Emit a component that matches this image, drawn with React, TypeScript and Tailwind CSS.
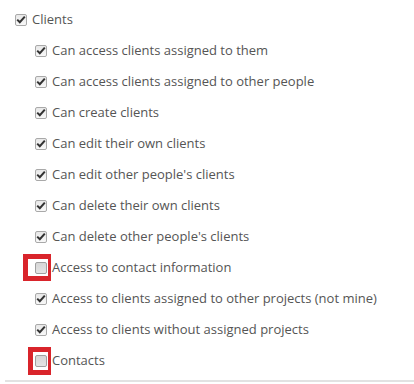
import React from 'react'

type Item = { label: string; checked: boolean; marked?: 'a' | 'b' }

const items: Item[] = [
  { label: 'Can access clients assigned to them', checked: true },
  { label: 'Can access clients assigned to other people', checked: true },
  { label: 'Can create clients', checked: true },
  { label: 'Can edit their own clients', checked: true },
  { label: "Can edit other people's clients", checked: true },
  { label: 'Can delete their own clients', checked: true },
  { label: "Can delete other people's clients", checked: true },
  { label: 'Access to contact information', checked: false, marked: 'a' },
  { label: 'Access to clients assigned to other projects (not mine)', checked: true },
  { label: 'Access to clients without assigned projects', checked: true },
  { label: 'Contacts', checked: false, marked: 'b' },
]

function Box({ checked }: { checked: boolean }) {
  if (!checked) {
    return (
      <span className="block w-[12px] h-[12px] rounded-[2px] border border-[#a0a0a0] bg-gradient-to-b from-[#d6d6d6] to-[#e4e4e4] shrink-0" />
    )
  }
  return (
    <span className="flex items-center justify-center w-[12px] h-[12px] rounded-[2px] border border-[#a9a9a9] bg-gradient-to-b from-[#e8e8e8] to-[#f8f8f8] shrink-0">
      <svg width="10" height="9" viewBox="0 0 10 9">
        <path d="M1.2 4.6 L3.8 7.2 L8.8 1.6" fill="none" stroke="#333" strokeWidth="2" />
      </svg>
    </span>
  )
}

function Row({ item }: { item: Item }) {
  return (
    <div className="flex items-center h-[31px] pl-[35px]">
      <span className="relative">
        <Box checked={item.checked} />
        {item.marked === 'a' && (
          <span className="absolute left-[-12px] top-[-8px] w-[28px] h-[27px] border-[5px] border-r-[3px] border-[#d9242b] pointer-events-none" />
        )}
        {item.marked === 'b' && (
          <span className="absolute left-[-7px] top-[-8px] w-[23px] h-[28px] border-[5px] border-r-[3px] border-[#d9242b] pointer-events-none" />
        )}
      </span>
      <span className="ml-[5px]">{item.label}</span>
    </div>
  )
}

export default function App() {
  return (
    <div className="w-[414px] h-[384px] bg-white text-[13px] text-[#555] overflow-hidden" style={{ fontFamily: '"Open Sans", sans-serif' }}>
      <div className="pt-[4px]">
        <div className="flex items-center h-[31px] pl-[15px]">
          <Box checked={true} />
          <span className="ml-[5px]">Clients</span>
        </div>
        {items.map((it) => (
          <Row key={it.label} item={it} />
        ))}
      </div>
      <div className="mt-[4px] ml-[5px] h-[2px] bg-[#e2e2e2]" />
    </div>
  )
}
